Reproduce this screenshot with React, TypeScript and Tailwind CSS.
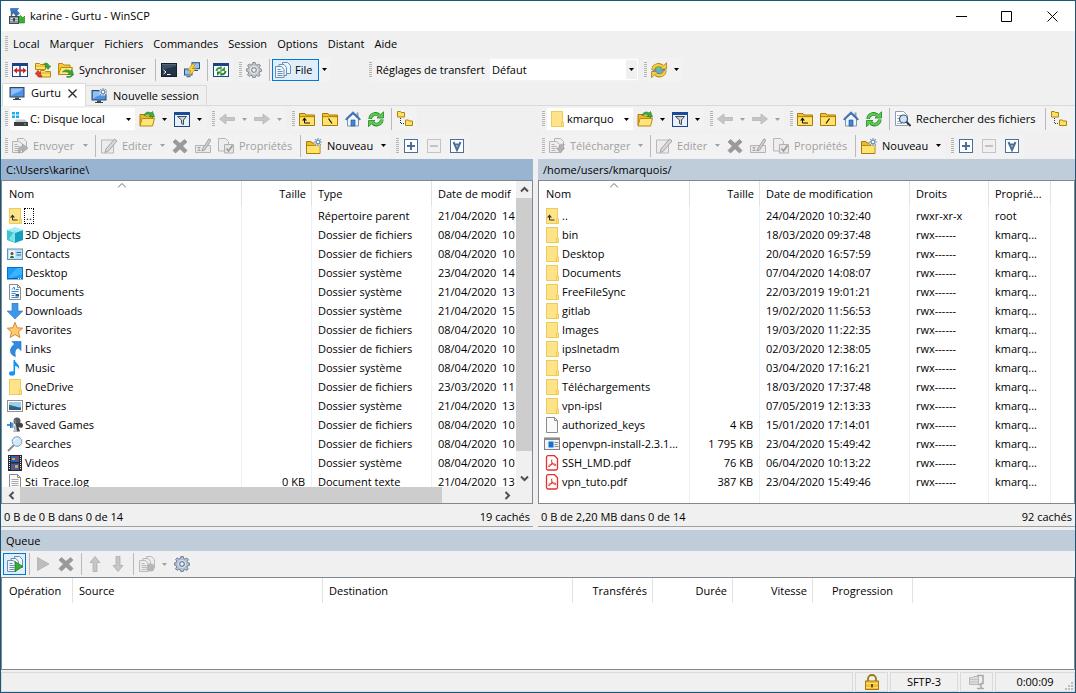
import React from 'react';

type Kids = { children?: React.ReactNode };

/* ---------- icons ---------- */

const Ico = ({ children }: Kids) => (
    <svg width="16" height="16" viewBox="0 0 16 16" fill="none" className="shrink-0" aria-hidden="true">
        {children}
    </svg>
);

const Caret = ({ muted }: { muted?: boolean }) => (
    <svg width="5" height="3" viewBox="0 0 5 3" className="shrink-0" aria-hidden="true">
        <path d="M0 0h5L2.5 3z" fill={muted ? '#a0a0a0' : '#000'} />
    </svg>
);

const AppIcon = () => (
    <Ico>
        <path d="M1.5 0.5h8l-1.5 2 2.500 3-3.500 2.500-2.500-3-2 1.500z" fill="#2b7fe0" stroke="#1b5cb0" strokeWidth=".6" />
        <path d="M15.500 15h-7l1.500-2-1.500-3 3-2.500 2.500 2.500 1.500-2z" fill="#35b52f" stroke="#1d7a1b" strokeWidth=".6" />
        <path d="M2.500 9V6.500a2.500 2.500 0 0 1 5 0V9" stroke="#5b6470" strokeWidth="1.500" />
        <rect x=".5" y="8.500" width="9" height="7" fill="#8e99a6" stroke="#3f4853" />
        <path d="M1 10.500h8M1 12.500h8" stroke="#c3cad1" />
        <path d="M5 10v3.500" stroke="#20262d" strokeWidth="1.500" />
    </Ico>
);

const CompareIcon = () => (
    <Ico>
        <rect x=".5" y="1.500" width="15" height="13" fill="#fff" stroke="#1d4480" />
        <path d="M0 2.500h16" stroke="#1d4480" strokeWidth="3" />
        <path d="M8 2v12" stroke="#1d4480" strokeWidth="1.500" />
        <path d="M1.500 8.500l3.500-3v2h6v-2l3.500 3-3.500 3v-2H5v2z" fill="#d02424" />
    </Ico>
);

const SyncBrowseIcon = () => (
    <Ico>
        <path d="M.5 1.500h4l1 1h5v5h-10z" fill="#ffe06a" stroke="#b98a10" />
        <path d="M5.500 8.500h4l1 1h5v5.500h-10z" fill="#ffe06a" stroke="#b98a10" />
        <path d="M1 4h9M6 11h9" stroke="#d8a920" />
        <path d="M8.500 2.200C10.500.2 13.500.8 14 4h1.800l-2.800 3.500L9.800 4h1.700c-.3-1.300-1.500-1.800-3-1.800z" fill="#3aa535" stroke="#1f7a1c" strokeWidth=".5" />
        <path d="M7 14.500c-2.500 1.500-5 .5-5.500-2.500H0l3-3.800L6.200 12H4.500c.3 1.300 1.200 1.800 2.500 1.500z" fill="#e83a3a" stroke="#a31c1c" strokeWidth=".5" />
    </Ico>
);

const FolderSyncIcon = () => (
    <Ico>
        <path d="M.5 12.500v-11h4l1.500 1.500h6v3" fill="#f5cb3c" stroke="#b98a10" />
        <path d="M.5 12.500l2.500-7h11.500l-2.500 7z" fill="#ffe682" stroke="#b98a10" />
        <path d="M4.500 10c2-2.500 5.500-2.800 8-.8l1.500-1.700 1.500 5.500-5.500-.5 1.300-1.500c-2-1.300-4-1.500-6.800-1z" fill="#3aa535" stroke="#1f7a1c" strokeWidth=".6" />
        <path d="M14.500 13c-1.500 2-4 2.300-6 1.500" stroke="#2f9630" strokeWidth="1.500" />
    </Ico>
);

const ConsoleIcon = () => (
    <Ico>
        <rect x=".5" y="1.500" width="15" height="13" fill="#243446" stroke="#14202e" />
        <path d="M1 2.500h14" stroke="#6b8098" />
        <path d="M1 8L15 4v-1.500H1z" fill="#3c5064" />
        <path d="M2.500 8l2.500 2-2.500 2" stroke="#fff" />
        <path d="M6 12.500h3.500" stroke="#fff" />
    </Ico>
);

const PuttyIcon = () => (
    <Ico>
        <rect x="8" y=".7" width="7.500" height="6" fill="#8fc3f7" stroke="#2d527d" />
        <path d="M10 8.500h4" stroke="#2d527d" />
        <rect x=".5" y="7" width="7.500" height="6" fill="#8fc3f7" stroke="#2d527d" />
        <path d="M2.500 14.700h4" stroke="#2d527d" />
        <path d="M8.500 2L3.500 8.500h3.200L5.500 14l6.500-7.500H8.500L11.500 2z" fill="#ffd43a" stroke="#b58610" strokeWidth=".6" />
    </Ico>
);

/* two arrows chasing each other, shared by the refresh-like icons */
const CycleArrows = ({ fill, edge }: { fill: string; edge: string }) => (
    <>
        <path d="M2.200 8C2.500 3.500 7.500 1.500 11.200 4.200" stroke={edge} strokeWidth="3.600" />
        <path d="M15.500 .8v6.200H9z" fill={fill} stroke={edge} strokeWidth=".8" />
        <path d="M2.200 7.700C2.500 3.500 7.500 1.500 11.800 4.600" stroke={fill} strokeWidth="2.200" />
        <path d="M13.800 8.500C13.500 13 8.500 15 4.800 12.300" stroke={edge} strokeWidth="3.600" />
        <path d="M.5 15.700V9.500H7z" fill={fill} stroke={edge} strokeWidth=".8" />
        <path d="M13.800 8.800C13.500 13 8.500 15 4.200 11.900" stroke={fill} strokeWidth="2.200" />
    </>
);

const RefreshPanelsIcon = () => (
    <Ico>
        <rect x=".5" y="1.500" width="15" height="13" fill="#fff" stroke="#1d4480" />
        <path d="M0 2.500h16" stroke="#1d4480" strokeWidth="3" />
        <path d="M8 3.500v11" stroke="#5f81b5" />
        <path d="M3.500 9C3.500 6.500 6 5.300 8.500 6.300" stroke="#35a035" strokeWidth="2" />
        <path d="M12 4.500v4.500H7.500z" fill="#35a035" />
        <path d="M12.500 9c0 2.800-2.500 4-5 3" stroke="#23862a" strokeWidth="2" />
        <path d="M4 14V9.500h4.500z" fill="#23862a" />
    </Ico>
);

const GearIcon = ({ blue }: { blue?: boolean }) => (
    <Ico>
        <path
            d="M6.800 .5h2.400l.4 2 1.500.6L12.900 2l1.500 1.700-1.200 1.700.6 1.500 1.900.3v2l-2 .5-.6 1.500 1.100 1.800-1.500 1.500-1.800-1.100-1.400.6-.4 1.700H6.800l-.5-1.900-1.500-.6-1.700 1.200-1.600-1.600 1.200-1.700-.6-1.500L.3 9V7l1.900-.4.6-1.500-1.200-1.600L3.200 1.900l1.700 1.200 1.500-.6z"
            fill={blue ? '#b4c0cf' : '#c3c6ca'}
            stroke={blue ? '#5f7690' : '#7d8288'}
            strokeWidth=".9"
        />
        <circle cx="8" cy="8" r="3.700" stroke={blue ? '#dbe4ee' : '#e8eaec'} />
        <circle cx="8" cy="8" r="2.300" fill="#f0f0f0" stroke={blue ? '#4f6b8c' : '#7d8288'} />
    </Ico>
);

const CopiesIcon = ({ tone = '#6a90b8', fill = '#eef5fc', children }: { tone?: string; fill?: string } & Kids) => (
    <Ico>
        <path d="M7.500 .5h5l3 3v8h-8z" fill={fill} stroke={tone} />
        <path d="M4 2.500h5l2.500 3v8H4z" fill={fill} stroke={tone} />
        <path d="M.5 4.500h6l2.500 3v8H.5z" fill={fill} stroke={tone} />
        <path d="M2.500 7.500h3M2.500 9.500h5M2.500 11.500h5M2.500 13.500h5" stroke={tone} />
        {children}
    </Ico>
);

const GlobeIcon = () => (
    <Ico>
        <circle cx="8" cy="8.500" r="6" fill="#4c9ae8" stroke="#2a67b0" strokeWidth=".6" />
        <path d="M5 5.500l3-1L9.500 6 7 9l-1.500-.5zM8.500 9.500l3-.5v2l-2 1.500z" fill="#6fcf5c" />
        <CycleArrows fill="#f7cf45" edge="#a87c0c" />
        <circle cx="8" cy="8.300" r="2.800" fill="#5aa6ec" />
        <path d="M6 7l2-1.500 1.500 1L7.500 9zM8.500 9.500l2-.5-1 1.800z" fill="#6fcf5c" />
    </Ico>
);

const MonitorIcon = ({ star }: { star?: boolean }) => (
    <Ico>
        <rect x="1" y="2.500" width="14" height="9.500" fill="#4d93e6" stroke="#3b4654" />
        <path d="M2 11V3.500h12C11 8 6 7 2 11z" fill="#8fc0f7" />
        <path d="M6 12.500h4v1.500H6z" fill="#3b4654" />
        <path d="M4 14.500h8" stroke="#3b4654" />
        {star && <StarBurst />}
    </Ico>
);

const StarBurst = () => (
    <>
        <circle cx="12" cy="4" r="3.800" fill="#f4f6f8" />
        <path d="M12 0v8M8 4h8M9.200 1.200l5.600 5.600M14.800 1.200L9.200 6.800" stroke="#6c8fb4" strokeWidth="1.100" />
        <circle cx="12" cy="4" r="1.800" fill="#fff" stroke="#6c8fb4" />
    </>
);

const DiskIcon = () => (
    <Ico>
        <path d="M0 1h3v2.500H0zM4 1h3v2.500H4zM0 4.500h3V7H0zM4 4.500h3V7H4z" fill="#18aef0" />
        <path d="M4 8.500h9l2.500 3h-13z" fill="#c9cccf" />
        <rect x="2" y="11" width="14" height="4" fill="#3c3f43" />
        <path d="M12 13h2" stroke="#3fe05a" />
    </Ico>
);

const FolderOpenIcon = () => (
    <Ico>
        <path d="M1 14.500v-11h4.500l1 1.500h7v3" fill="#eeb92c" stroke="#a97b0b" />
        <path d="M1 15l2-7.500h12.500L13.500 15z" fill="#ffe57a" stroke="#b98a10" />
        <path d="M5 4.500C6 1.500 9 0 12 2l1.500-1.500L15.500 6l-5.500-.3 1.500-1.500C9.500 2.800 7.500 3 5 4.500z" fill="#3fae3a" stroke="#1e7b1d" strokeWidth=".6" />
    </Ico>
);

const FilterIcon = () => (
    <Ico>
        <rect x=".5" y="1.500" width="15" height="14" fill="#e8f1fb" stroke="#1d4480" />
        <path d="M0 2.500h16" stroke="#1d4a94" strokeWidth="3" />
        <path d="M3.500 5.500h9L9.500 9v4.500l-2-1V9z" fill="#cfd3d8" stroke="#454b54" />
    </Ico>
);

const ArrowIcon = ({ flip }: { flip?: boolean }) => (
    <Ico>
        <path
            d={flip ? 'M15.500 8L9 3v3.500H.5v3H9V13z' : 'M.5 8L7 3v3.500h8.500v3H7V13z'}
            fill="#c6c6c6"
            stroke="#b0b0b0"
            strokeWidth=".7"
        />
    </Ico>
);

const FolderIcon = ({ children }: Kids) => (
    <Ico>
        <path d="M.5 14.500v-12h5.500l1 1.500h8.500v10.500z" fill="#f3c331" stroke="#a87a0a" />
        <path d="M1 6.500h14v7.500H1z" fill="#ffe36c" />
        <path d="M1 5.500h14" stroke="#b98a10" />
        {children}
    </Ico>
);

const FolderUpIcon = () => (
    <FolderIcon>
        <path d="M5.500 8.500v3.500h5.500" stroke="#111" />
        <path d="M5.500 6.500L8 9.500H3z" fill="#111" />
    </FolderIcon>
);

const FolderRootIcon = ({ flip }: { flip?: boolean }) => (
    <FolderIcon>
        <path d={flip ? 'M9.500 7.500l-3.500 5' : 'M6.500 7.500l3.500 5'} stroke="#111" strokeWidth="1.200" />
    </FolderIcon>
);

const HomeIcon = () => (
    <Ico>
        <path d="M2.500 7.500V15h11V7.500L8 2z" fill="#eef4fb" stroke="#7e94ad" />
        <path d="M11.500 1.500h2V6h-2z" fill="#8da0b5" />
        <path d="M8 .7L.5 8l1 1L8 3l6.500 6 1-1z" fill="#3c77c4" stroke="#24508c" strokeWidth=".6" />
        <path d="M6 9h4v6H6z" fill="#3f86d8" stroke="#24508c" strokeWidth=".6" />
    </Ico>
);

const RefreshIcon = () => (
    <Ico>
        <CycleArrows fill="#5ecb50" edge="#1c8520" />
    </Ico>
);

const TreeIcon = () => (
    <Ico>
        <path d="M.5 .5h3l.7 1h3.300v4.500h-7zM8.500 9h3l.7 1h3.300v4.500h-7z" fill="#ffdf60" stroke="#b08410" />
        <path d="M3.500 7v5.500h4" stroke="#333" strokeDasharray="1 1" />
    </Ico>
);

const TransferIcon = ({ down }: { down?: boolean }) => (
    <Ico>
        <path d="M5.500 .5h6l3 3v8h-9z" fill="#ededed" stroke="#b4b4b4" />
        <path d="M.5 3.500h7l3 3v8H.5z" fill="#ededed" stroke="#b4b4b4" />
        <path d="M2.500 6.500h3M2.500 8.500h5M2.500 10.500h4M2.500 12.500h4" stroke="#b4b4b4" />
        <path
            d={down ? 'M15.500 6.500c-3-1-5.500 0-5.500 3.500H7.500l4 5 4-5h-2.500c0-1.500.5-2.500 2.500-3.500z' : 'M6.500 15v-3.500c0-2 1.500-3 4-3V6l5.500 4-5.500 4.500V12c-1.500 0-2.500.5-2.500 3z'}
            fill="#b2b2b2"
            stroke="#9b9b9b"
            strokeWidth=".6"
        />
    </Ico>
);

const EditIcon = () => (
    <Ico>
        <path d="M.5 2h12v13H.5z" fill="#ececec" stroke="#b8b8b8" />
        <path d="M5 11l8.500-10 2.500 2L7.500 13 4 14.500z" fill="#d6d6d6" stroke="#a6a6a6" />
    </Ico>
);

const CrossIcon = () => (
    <Ico>
        <path d="M3.500 1.500L8 5.500l4.500-4L15 4l-4.500 4 4.500 4.500-2.500 2.500L8 10.800 3.500 15 1 12.500 5.500 8 1 4z" fill="#9a9a9a" stroke="#898989" strokeWidth=".7" />
    </Ico>
);

const RenameIcon = () => (
    <Ico>
        <path d="M.5 7.500h15v7H.5z" fill="#e9e9e9" stroke="#b4b4b4" />
        <path d="M2.500 9.500h3M2.500 12.500h3M4 9.500v3" stroke="#a5a5a5" />
        <path d="M7.500 11L14 .8l2 1.500L9.500 12l-2.500 1z" fill="#d2d2d2" stroke="#a0a0a0" />
    </Ico>
);

const PropsIcon = () => (
    <Ico>
        <path d="M.5 .5h7l3 3v9.500H.5z" fill="#ededed" stroke="#b6b6b6" />
        <path d="M6.500 6.500h9v8.500h-9z" fill="#e6e6e6" stroke="#b0b0b0" />
        <path d="M8.500 10.500l2 2.500 4-5.500" stroke="#9a9a9a" strokeWidth="1.600" />
    </Ico>
);

const NewFolderIcon = () => (
    <Ico>
        <path d="M.5 15.500v-12h4.500l1 1.500h8v10.500z" fill="#eeb92c" stroke="#a97b0b" />
        <path d="M1 8h12.500v7H1z" fill="#ffe36c" />
        <path d="M1 7.500h12.500" stroke="#b98a10" />
        <StarBurst />
    </Ico>
);

const BoxIcon = ({ muted, children }: { muted?: boolean } & Kids) => (
    <Ico>
        <rect x="1.500" y="1.500" width="13" height="13" fill={muted ? '#f0f0f0' : '#fff'} stroke={muted ? '#c4c4c4' : '#4a6f9c'} />
        {children}
    </Ico>
);

const PlusIcon = () => (
    <BoxIcon>
        <path d="M8 4v8M4 8h8" stroke="#4a6f9c" strokeWidth="2" />
    </BoxIcon>
);

const MinusIcon = () => (
    <BoxIcon muted>
        <path d="M4 8h8" stroke="#c4c4c4" strokeWidth="2" />
    </BoxIcon>
);

const InvertIcon = () => (
    <BoxIcon>
        <path d="M4.500 4L8 12l3.500-8M5 6.500h6" stroke="#4a6f9c" strokeWidth="2" />
    </BoxIcon>
);

const SearchFilesIcon = () => (
    <Ico>
        <path d="M.5 .5h8l4 4v10H.5z" fill="#fff" stroke="#8a9db3" />
        <path d="M2 4.500h4M2 7.500h3M2 10.500h3M2 12.500h5" stroke="#a5b6c9" />
        <circle cx="8.500" cy="8" r="4" fill="#cfe3f7" stroke="#3b5573" strokeWidth="1.200" />
        <path d="M11.500 11l4 4" stroke="#2c3b4d" strokeWidth="2" />
    </Ico>
);

/* list icons */

const PlainFolder = ({ up }: { up?: boolean }) => (
    <Ico>
        <path d="M2 0h12v11h1v5H2z" fill="#ffe389" />
        <path d="M2 .5h11.500v10.500M2.500 0v15.500h12v-4.500h-2v4" stroke="#eccb58" />
        {up && <path d="M5.500 8.500v3.500h5" stroke="#333" />}
        {up && <path d="M5.500 6.500L8 9.500H3z" fill="#333" />}
    </Ico>
);

const CubeIcon = () => (
    <Ico>
        <path d="M0 3l8-3 8 3-8 3z" fill="#a8ecf2" />
        <path d="M0 3l8 3v10l-8-3z" fill="#3cc3d2" />
        <path d="M16 3L8 6v10l8-3z" fill="#12a0c0" />
        <path d="M2 12l6-9v13z" fill="#7fe0e8" />
    </Ico>
);

const ContactsIcon = () => (
    <Ico>
        <rect x=".5" y="3" width="15" height="10.500" fill="#c3e0f5" stroke="#5a97b8" />
        <rect x="2" y="4.500" width="6" height="7.500" fill="#eef6fb" />
        <path d="M3 12c0-3 4-3 4 0z" fill="#336b3a" />
        <circle cx="5" cy="7.500" r="1.500" fill="#704a30" />
        <path d="M9.500 6.500h4.500M9.500 9h4.500" stroke="#2c6a9a" />
    </Ico>
);

const DesktopIcon = () => (
    <Ico>
        <rect x=".5" y="2.500" width="15" height="11.500" fill="#1aa0fb" stroke="#0b70c4" />
        <path d="M1 14v-1l9-10h5v6z" fill="#3db2ff" />
        <path d="M1 13.500h14" stroke="#0a5fae" />
        <path d="M11 13.500h1M13 13.500h1" stroke="#fff" />
    </Ico>
);

const PageIcon = ({ lines, rich }: { lines?: boolean; rich?: boolean }) => (
    <Ico>
        <path d="M2.500 .5h8l3 3v12h-11z" fill="#fafafa" stroke="#8b8b8b" />
        <path d="M10.500 .5v3h3" stroke="#8b8b8b" />
        {lines && <path d="M4.500 5.500h7M4.500 7.500h7M4.500 9.500h7M4.500 11.500h7M4.500 13.500h7" stroke="#a9a9a9" />}
        {rich && <path d="M5 5.500L7 3l1 3M9 5.500h3M4.500 7.500h7M4.500 9.500h4M4.500 11.500h3M4.500 13.500h7" stroke="#3f8fd0" />}
        {rich && <path d="M8.500 10h3.500v2.500H8.500z" fill="#27597d" />}
    </Ico>
);

const DownloadsIcon = () => (
    <Ico>
        <path d="M5 0h6v8h4.800L8 16 .2 8H5z" fill="#3f97e8" stroke="#2475c7" strokeWidth=".6" />
    </Ico>
);

const FavoritesIcon = () => (
    <Ico>
        <path d="M8 .5l2.200 5.300 5.500.4-4.200 3.700 1.400 5.600L8 12.500l-4.900 3 1.400-5.600L.3 6.200l5.500-.4z" fill="#ffcb6b" stroke="#d0883a" />
    </Ico>
);

const LinksIcon = () => (
    <Ico>
        <path d="M5 .5h9v9l-2.500-2.500c-3.500 1-4 4-3 8.500C3 14 1 8.500 7.500 3z" fill="#2f8be0" stroke="#1c6ab8" strokeWidth=".6" />
    </Ico>
);

const MusicIcon = () => (
    <Ico>
        <ellipse cx="5" cy="13.500" rx="3" ry="2.200" fill="#0e96f0" />
        <path d="M6.500 0H8c0 3.500 5.500 4 4 9.500C11.500 7 9.500 6 8 6v7.500H6.500z" fill="#0e96f0" />
    </Ico>
);

const PicturesIcon = () => (
    <Ico>
        <rect x=".5" y="2.500" width="15" height="11" fill="#fff" stroke="#8f8f8f" />
        <rect x="2" y="4" width="12" height="8" fill="#9ccdf0" />
        <path d="M2 8c4-1 7 1.500 12 1.500V12H2z" fill="#2f5f80" />
        <path d="M2 7c3-.5 4 1.500 7 2H2z" fill="#3d7a58" />
    </Ico>
);

const GamesIcon = () => (
    <Ico>
        <circle cx="10" cy="4" r="3.500" fill="#555b62" />
        <path d="M10 6.500c4-2 6.500 0 6 2.500s-3 2-4.500 1l1.500 4.500H6.500L8.500 6z" fill="#3f454b" />
        <path d="M8 2c-1 2 .5 3 .5 5L6.500 14.500H10z" fill="#bfc5ca" />
        <path d="M0 7h3V5l3.500 1v5L3 10.500V9H0z" fill="#4d92cf" />
        <path d="M3.500 5v6" stroke="#2d6ca8" />
    </Ico>
);

const SearchesIcon = () => (
    <Ico>
        <path d="M1 15l6-6" stroke="#8b8b8b" strokeWidth="2" />
        <circle cx="10" cy="5.500" r="4.800" fill="#cfe8fa" stroke="#7c9db5" />
        <path d="M7 5c.5-2 2-2.500 3.500-2.500" stroke="#fff" />
    </Ico>
);

const VideosIcon = () => (
    <Ico>
        <path d="M1 0h14v16H1z" fill="#2b2b2b" />
        <path d="M2.500 1v14M13.500 1v14" stroke="#e8e8e8" strokeDasharray="1 1" />
        <path d="M4 1h8v6H4zM4 8.500h8V15H4z" fill="#2c62b8" />
        <path d="M5 3h3v2H5zM8 10h3v3H8z" fill="#e8a12e" />
        <path d="M9 2h2v3H9zM5 11h2v3H5z" fill="#c7372f" />
    </Ico>
);

const ExeIcon = () => (
    <Ico>
        <rect x=".5" y="2" width="15" height="11.500" fill="#f2f2f2" stroke="#7e7e7e" />
        <path d="M0 3h16" stroke="#8a8a8a" strokeWidth="2" />
        <rect x="4.500" y="5.500" width="5" height="6" fill="#0b74d4" />
        <path d="M10.500 6.500h4M10.500 8.500h3M10.500 10.500h4" stroke="#8f8f8f" />
    </Ico>
);

const PdfIcon = () => (
    <Ico>
        <path d="M4 .7h6.500l3 3v9.800a1.500 1.500 0 0 1-1.500 1.500H4a1.500 1.500 0 0 1-1.500-1.500V2.200A1.500 1.500 0 0 1 4 .7z" fill="#fff" stroke="#e2322d" strokeWidth="1.300" />
        <path d="M8 4.500c-1 0 0 3 0 3.500-.5 1.500-1.500 3.500-3 3.500s.5-2 3-2.500 4.500.5 4 1.200C11 11.500 8.500 9 8 7.500" stroke="#e2322d" />
    </Ico>
);

const LockIcon = () => (
    <Ico>
        <path d="M4 8V5a4 4 0 0 1 8 0v3" stroke="#a2761a" strokeWidth="1.800" />
        <rect x="1.500" y="7" width="13" height="8.500" fill="#f5c02e" stroke="#a2761a" />
        <path d="M2 9.500h12M2 13.500h12" stroke="#ffdf74" />
        <path d="M8 10v3.500" stroke="#4a3505" strokeWidth="1.600" />
    </Ico>
);

const CompressIcon = () => (
    <Ico>
        <path d="M.5 3.500h3l1-1h5v8h-9z" fill="#dcdcdc" stroke="#b8b8b8" />
        <path d="M1 5.500h8M1 8h8" stroke="#c4c4c4" />
        <path d="M8 1.500h6v8H12v5M8 14.500h7M11 10.500H9" stroke="#ababab" strokeWidth="1.600" />
    </Ico>
);

/* ---------- toolbar parts ---------- */

const Row = ({ className = '', children }: { className?: string } & Kids) => (
    <div className={`flex shrink-0 items-center gap-1.5 overflow-hidden pl-1 ${className}`}>{children}</div>
);

const Grip = () => (
    <span className="mr-px h-4 w-[3px] bg-[repeating-linear-gradient(to_bottom,#b4b4b4_0_1px,transparent_1px_2px)]" />
);

const Group = ({ children }: Kids) => (
    <div className="flex h-6 shrink-0 items-center bg-[#f2f2f2]">
        <Grip />
        {children}
    </div>
);

const Sep = () => (
    <span className="flex w-1.5 shrink-0 pl-[3px]">
        <span className="h-[22px] w-px bg-[#b9b9b9]" />
    </span>
);

type ToolProps = {
    title: string;
    icon: React.ReactNode;
    text?: string;
    className?: string;
    disabled?: boolean;
};

const Tool = ({ title, icon, text, className = 'w-[23px]', disabled }: ToolProps) => (
    <button
        type="button"
        title={title}
        disabled={disabled}
        className={`flex h-[22px] shrink-0 items-center gap-[5px] whitespace-nowrap pl-[3px] disabled:text-[#a0a0a0] ${className}`}
    >
        {icon}
        {text}
    </button>
);

const Drop = ({ title, disabled }: { title: string; disabled?: boolean }) => (
    <button type="button" title={title} disabled={disabled} className="flex h-[22px] w-3 shrink-0 items-center pl-[3px]">
        <Caret muted={disabled} />
    </button>
);

const NavBar = ({ remote }: { remote?: boolean }) => (
    <Row className="h-[26px]">
        <Group>
            <div className={`mx-px flex h-[22px] items-center bg-white pr-1 pl-0.5 ${remote ? 'w-[86px]' : 'w-[125px]'}`}>
                {remote ? <PlainFolder /> : <DiskIcon />}
                <select
                    aria-label={remote ? 'Dossier distant' : 'Lecteur local'}
                    className="min-w-0 flex-1 appearance-none overflow-hidden bg-white pl-0.5 outline-none"
                >
                    <option>{remote ? 'kmarquo' : 'C: Disque local'}</option>
                </select>
                <span className="pl-1">
                    <Caret />
                </span>
            </div>
            <Tool title="Ouvrir" icon={<FolderOpenIcon />} />
            <Drop title="Signets" />
            <Tool title="Filtre" icon={<FilterIcon />} />
            <Drop title="Filtres" />
        </Group>
        <Group>
            <Tool title="Précédent" icon={<ArrowIcon />} disabled />
            <Drop title="Historique précédent" disabled />
            <Tool title="Suivant" icon={<ArrowIcon flip />} disabled />
            <Drop title="Historique suivant" disabled />
        </Group>
        <Group>
            <Tool title="Répertoire parent" icon={<FolderUpIcon />} />
            <Tool title="Racine" icon={<FolderRootIcon flip={remote} />} />
            <Tool title="Accueil" icon={<HomeIcon />} />
            <Tool title="Rafraîchir" icon={<RefreshIcon />} />
            <Sep />
            {remote && (
                <>
                    <Tool title="Rechercher" icon={<SearchFilesIcon />} text="Rechercher des fichiers" className="w-[150px]" />
                    <Sep />
                </>
            )}
            <Tool title="Arborescence" icon={<TreeIcon />} />
        </Group>
    </Row>
);

const ActionBar = ({ remote }: { remote?: boolean }) => (
    <Row className="h-[27px]">
        <Group>
            <Tool
                title="Transférer"
                icon={<TransferIcon down={remote} />}
                text={remote ? 'Télécharger' : 'Envoyer'}
                className={remote ? 'w-[89px]' : 'w-[71px]'}
                disabled
            />
            <Drop title="Options de transfert" disabled />
            <Sep />
            <Tool title="Editer" icon={<EditIcon />} text="Editer" className="w-[59px]" disabled />
            <Drop title="Editer avec" disabled />
            <Tool title="Supprimer" icon={<CrossIcon />} disabled />
            <Tool title="Renommer" icon={<RenameIcon />} disabled />
            <Tool title="Propriétés" icon={<PropsIcon />} text="Propriétés" className="w-[82px]" disabled />
            <Sep />
            <Tool title="Nouveau" icon={<NewFolderIcon />} text="Nouveau" className="w-[75px]" />
            <Drop title="Nouveau élément" />
        </Group>
        <Group>
            <Tool title="Sélectionner" icon={<PlusIcon />} />
            <Tool title="Désélectionner" icon={<MinusIcon />} disabled />
            <Tool title="Tout sélectionner" icon={<InvertIcon />} />
        </Group>
    </Row>
);

/* ---------- file lists ---------- */

type Entry = { icon: React.ReactNode; cells: string[] };
type Column = { label: string; width: string; right?: boolean };

const dir = 'Dossier de fichiers';
const sys = 'Dossier système';

const localColumns: Column[] = [
    { label: 'Nom', width: 'w-[240px]' },
    { label: 'Taille', width: 'w-[70px]', right: true },
    { label: 'Type', width: 'w-[120px]' },
    { label: 'Date de modif', width: 'w-[86px]' },
];

const localFiles: Entry[] = [
    { icon: <PlainFolder up />, cells: ['..', '', 'Répertoire parent', '21/04/2020  14'] },
    { icon: <CubeIcon />, cells: ['3D Objects', '', dir, '08/04/2020  10'] },
    { icon: <ContactsIcon />, cells: ['Contacts', '', dir, '08/04/2020  10'] },
    { icon: <DesktopIcon />, cells: ['Desktop', '', sys, '23/04/2020  14'] },
    { icon: <PageIcon rich />, cells: ['Documents', '', sys, '21/04/2020  13'] },
    { icon: <DownloadsIcon />, cells: ['Downloads', '', sys, '21/04/2020  15'] },
    { icon: <FavoritesIcon />, cells: ['Favorites', '', dir, '08/04/2020  10'] },
    { icon: <LinksIcon />, cells: ['Links', '', dir, '08/04/2020  10'] },
    { icon: <MusicIcon />, cells: ['Music', '', sys, '08/04/2020  10'] },
    { icon: <PlainFolder />, cells: ['OneDrive', '', dir, '23/03/2020  11'] },
    { icon: <PicturesIcon />, cells: ['Pictures', '', sys, '21/04/2020  13'] },
    { icon: <GamesIcon />, cells: ['Saved Games', '', dir, '08/04/2020  10'] },
    { icon: <SearchesIcon />, cells: ['Searches', '', dir, '08/04/2020  10'] },
    { icon: <VideosIcon />, cells: ['Videos', '', sys, '08/04/2020  10'] },
    { icon: <PageIcon lines />, cells: ['Sti_Trace.log', '0 KB', 'Document texte', '21/04/2020  13'] },
];

const remoteColumns: Column[] = [
    { label: 'Nom', width: 'w-[151px]' },
    { label: 'Taille', width: 'w-[70px]', right: true },
    { label: 'Date de modification', width: 'w-[150px]' },
    { label: 'Droits', width: 'w-[79px]' },
    { label: 'Proprié...', width: 'w-[62px]' },
];

const rwx = 'rwx------';
const own = 'kmarq...';

const remoteFiles: Entry[] = [
    { icon: <PlainFolder up />, cells: ['..', '', '24/04/2020 10:32:40', 'rwxr-xr-x', 'root'] },
    { icon: <PlainFolder />, cells: ['bin', '', '18/03/2020 09:37:48', rwx, own] },
    { icon: <PlainFolder />, cells: ['Desktop', '', '20/04/2020 16:57:59', rwx, own] },
    { icon: <PlainFolder />, cells: ['Documents', '', '07/04/2020 14:08:07', rwx, own] },
    { icon: <PlainFolder />, cells: ['FreeFileSync', '', '22/03/2019 19:01:21', rwx, own] },
    { icon: <PlainFolder />, cells: ['gitlab', '', '19/02/2020 11:56:53', rwx, own] },
    { icon: <PlainFolder />, cells: ['Images', '', '19/03/2020 11:22:35', rwx, own] },
    { icon: <PlainFolder />, cells: ['ipslnetadm', '', '02/03/2020 12:38:05', rwx, own] },
    { icon: <PlainFolder />, cells: ['Perso', '', '03/04/2020 17:16:21', rwx, own] },
    { icon: <PlainFolder />, cells: ['Téléchargements', '', '18/03/2020 17:37:48', rwx, own] },
    { icon: <PlainFolder />, cells: ['vpn-ipsl', '', '07/05/2019 12:13:33', rwx, own] },
    { icon: <PageIcon />, cells: ['authorized_keys', '4 KB', '15/01/2020 17:14:01', rwx, own] },
    { icon: <ExeIcon />, cells: ['openvpn-install-2.3.1...', '1 795 KB', '23/04/2020 15:49:42', rwx, own] },
    { icon: <PdfIcon />, cells: ['SSH_LMD.pdf', '76 KB', '06/04/2020 10:13:22', rwx, own] },
    { icon: <PdfIcon />, cells: ['vpn_tuto.pdf', '387 KB', '23/04/2020 15:49:46', rwx, own] },
];

const FileTable = ({ columns, files, focused }: { columns: Column[]; files: Entry[]; focused?: boolean }) => (
    <table className="h-full w-px table-fixed border-separate border-spacing-0">
        <thead>
            <tr className="h-[25px]">
                {columns.map((col, i) => (
                    <th
                        key={col.label}
                        className={`relative border-r border-[#e2e2e2] font-normal whitespace-nowrap ${col.width} ${
                            col.right ? 'pr-[5px] text-right' : i === 0 ? 'pl-[7px] text-left' : 'pl-1.5 text-left'
                        }`}
                    >
                        {col.label}
                        {i === 0 && (
                            <svg width="9" height="5" viewBox="0 0 9 5" className="absolute top-0.5 left-1/2 -translate-x-1/2" aria-hidden="true">
                                <path d="M.5 4.500l4-4 4 4" fill="none" stroke="#6d6d6d" />
                            </svg>
                        )}
                    </th>
                ))}
            </tr>
        </thead>
        <tbody>
            {files.map((file, r) => (
                <tr key={r} className="h-[19px]">
                    {file.cells.map((cell, i) => (
                        <td
                            key={i}
                            className={`h-[19px] border-r border-[#e9f2fb] p-0 whitespace-pre ${
                                columns[i].right ? 'pr-1.5 text-right' : i === 0 ? 'pl-[5px]' : 'pl-1.5'
                            }`}
                        >
                            {i === 0 ? (
                                <span className="flex h-[19px] items-center gap-0.5">
                                    {file.icon}
                                    {focused && r === 0 ? (
                                        <span className="-ml-px flex h-4 items-center border border-dotted border-black px-px">{cell}</span>
                                    ) : (
                                        <span>{cell}</span>
                                    )}
                                </span>
                            ) : (
                                cell
                            )}
                        </td>
                    ))}
                </tr>
            ))}
            <tr>
                {columns.map((col) => (
                    <td key={col.label} className="border-r border-[#e9f2fb] p-0" />
                ))}
            </tr>
        </tbody>
    </table>
);

const ScrollButton = ({ title, d, className }: { title: string; d: string; className: string }) => (
    <button type="button" title={title} className={`flex shrink-0 items-center justify-center bg-[#f0f0f0] ${className}`}>
        <svg width="9" height="9" viewBox="0 0 9 9" aria-hidden="true">
            <path d={d} fill="none" stroke="#505050" strokeWidth="2" />
        </svg>
    </button>
);

const Panel = ({ remote }: { remote?: boolean }) => (
    <section className={`flex min-w-0 flex-col ${remote ? 'flex-[537]' : 'flex-[532]'}`}>
        <NavBar remote={remote} />
        <ActionBar remote={remote} />
        <div className={`flex h-[21px] shrink-0 items-center pl-[5px] ${remote ? 'bg-[#bfcddb]' : 'bg-[#99b4d1]'}`}>
            {remote ? '/home/users/kmarquois/' : 'C:\\Users\\karine\\'}
        </div>
        <div className="flex min-h-0 flex-1 flex-col border border-[#828790] bg-white">
            {remote ? (
                <div className="min-h-0 flex-1 overflow-hidden">
                    <FileTable columns={remoteColumns} files={remoteFiles} />
                </div>
            ) : (
                <>
                    <div className="flex min-h-0 flex-1">
                        <div className="min-w-0 flex-1 overflow-hidden">
                            <FileTable columns={localColumns} files={localFiles} focused />
                        </div>
                        <div className="flex w-4 shrink-0 flex-col bg-[#f0f0f0]">
                            <ScrollButton title="Haut" d="M1 6.500l3.500-3.500L8 6.500" className="h-[17px]" />
                            <div className="flex-[252] bg-[#cdcdcd]" />
                            <div className="flex-[19]" />
                            <ScrollButton title="Bas" d="M1 2.500L4.500 6 8 2.500" className="h-[17px]" />
                        </div>
                    </div>
                    <div className="flex h-4 shrink-0 bg-[#f0f0f0] pr-4">
                        <ScrollButton title="Gauche" d="M6.500 1L3 4.500 6.500 8" className="w-[18px]" />
                        <div className="flex-[421] bg-[#cdcdcd]" />
                        <div className="flex-[56]" />
                        <ScrollButton title="Droite" d="M2.500 1L6 4.500 2.500 8" className="w-[18px]" />
                    </div>
                </>
            )}
        </div>
        <div className="flex h-[23px] shrink-0 items-center justify-between border-b border-[#a0a0a0] px-[3px] pt-[3px]">
            <span>{remote ? '0 B de 2,20 MB dans 0 de 14' : '0 B de 0 B dans 0 de 14'}</span>
            <span>{remote ? '92 cachés' : '19 cachés'}</span>
        </div>
    </section>
);

/* ---------- queue ---------- */

const queueColumns = [
    { label: 'Opération', style: 'w-[71px] pl-[7px] text-left' },
    { label: 'Source', style: 'w-[250px] pl-1.5 text-left' },
    { label: 'Destination', style: 'w-[250px] pl-1.5 text-left' },
    { label: 'Transférés', style: 'w-[80px] pr-[5px] text-right' },
    { label: 'Durée', style: 'w-[80px] pr-[5px] text-right' },
    { label: 'Vitesse', style: 'w-[80px] pr-[5px] text-right' },
    { label: 'Progression', style: 'w-[100px] text-center' },
];

const Queue = () => (
    <section className="mt-[3px] flex shrink-0 flex-col">
        <h2 className="flex h-[21px] items-center bg-[#bfcddb] pl-[5px]">Queue</h2>
        <div className="flex h-[26px] items-center">
            <button type="button" title="File d'attente" className="ml-0.5 flex h-[22px] w-[23px] items-center justify-center border border-[#0078d7] bg-[#e0eefa]">
                <CopiesIcon>
                    <path d="M8 5.500l8 5-8 5z" fill="#35ad30" stroke="#1b7a1a" strokeWidth=".7" />
                </CopiesIcon>
            </button>
            <Sep />
            <Tool
                title="Exécuter"
                disabled
                icon={
                    <Ico>
                        <path d="M2.500 1.500l11.500 6.500-11.500 6.500z" fill="#bdbdbd" stroke="#aaa" strokeWidth=".7" />
                    </Ico>
                }
            />
            <Tool title="Supprimer" icon={<CrossIcon />} disabled />
            <Sep />
            <Tool
                title="Monter"
                disabled
                icon={
                    <Ico>
                        <path d="M8 .5L3 6.500h3v9h4v-9h3z" fill="#c6c6c6" stroke="#acacac" strokeWidth=".8" />
                    </Ico>
                }
            />
            <Tool
                title="Descendre"
                disabled
                icon={
                    <Ico>
                        <path d="M8 15.500L3 9.500h3v-9h4v9h3z" fill="#c6c6c6" stroke="#acacac" strokeWidth=".8" />
                    </Ico>
                }
            />
            <Sep />
            <Tool
                title="Une fois la file vide"
                disabled
                icon={
                    <CopiesIcon tone="#b9b9b9" fill="#ececec">
                        <circle cx="11.500" cy="11.500" r="4" fill="#b5b5b5" />
                    </CopiesIcon>
                }
            />
            <Drop title="Actions" disabled />
            <Tool title="Préférences" icon={<GearIcon blue />} />
        </div>
        <div className="h-[93px] overflow-hidden border border-[#828790] bg-white">
            <table className="w-px table-fixed border-separate border-spacing-0">
                <thead>
                    <tr className="h-[25px]">
                        {queueColumns.map((col) => (
                            <th key={col.label} className={`border-r border-[#e2e2e2] font-normal ${col.style}`}>
                                {col.label}
                            </th>
                        ))}
                    </tr>
                </thead>
            </table>
        </div>
    </section>
);

const cell = 'flex h-full items-center justify-center border border-[#dadada]';

const StatusBar = () => (
    <footer className="flex h-[22px] shrink-0 gap-0.5 pt-0.5">
        <div className={`${cell} flex-1`} />
        <div className={`${cell} w-[33px]`}>
            <LockIcon />
        </div>
        <div className={`${cell} w-[68px]`}>SFTP-3</div>
        <div className={`${cell} w-[33px]`}>
            <CompressIcon />
        </div>
        <div className={`${cell} relative w-[80px]`}>
            0:00:09
            <svg width="8" height="8" viewBox="0 0 8 8" className="absolute right-px bottom-px" aria-hidden="true">
                <path d="M6 0h2v2H6zM3 3h2v2H3zM6 3h2v2H6zM0 6h2v2H0zM3 6h2v2H3zM6 6h2v2H6z" fill="#bdbdbd" />
            </svg>
        </div>
    </footer>
);

/* ---------- window ---------- */

const menus = ['Local', 'Marquer', 'Fichiers', 'Commandes', 'Session', 'Options', 'Distant', 'Aide'];

const TitleBar = () => (
    <header className="flex h-[30px] shrink-0 items-center bg-white pl-2">
        <AppIcon />
        <h1 className="flex-1 pl-[5px]">karine - Gurtu - WinSCP</h1>
        <button type="button" title="Réduire" className="flex h-full w-[46px] items-center justify-center">
            <svg width="11" height="11" viewBox="0 0 11 11" stroke="#000" fill="none"><path d="M0 5.500h11" /></svg>
        </button>
        <button type="button" title="Agrandir" className="flex h-full w-[45px] items-center justify-center">
            <svg width="11" height="11" viewBox="0 0 11 11" stroke="#000" fill="none"><path d="M.5 .5h10v10H.5z" /></svg>
        </button>
        <button type="button" title="Fermer" className="flex h-full w-[46px] items-center justify-center">
            <svg width="11" height="11" viewBox="0 0 11 11" stroke="#000" fill="none"><path d="M.5 .5l10 10M10.500 .5l-10 10" /></svg>
        </button>
    </header>
);

const MainToolbar = () => (
    <Row className="h-[25px]">
        <Group>
            <Tool title="Comparer" icon={<CompareIcon />} />
            <Tool title="Navigation synchronisée" icon={<SyncBrowseIcon />} />
            <Tool title="Synchroniser" icon={<FolderSyncIcon />} text="Synchroniser" className="w-[97px]" />
            <Sep />
            <Tool title="Console" icon={<ConsoleIcon />} />
            <Tool title="PuTTY" icon={<PuttyIcon />} />
            <Sep />
            <Tool title="Rafraîchir les panneaux" icon={<RefreshPanelsIcon />} />
        </Group>
        <Group>
            <Tool title="Préférences" icon={<GearIcon />} />
            <Sep />
            <button type="button" className="flex h-[22px] w-[47px] shrink-0 items-center gap-1 border border-[#0078d7] bg-[#e0eefa] pl-0.5">
                <CopiesIcon />
                File
            </button>
            <Drop title="Options de file" />
        </Group>
        <div className="w-[26px] shrink-0" />
        <Group>
            <label htmlFor="transfer" className="w-[117px] pl-[3px] whitespace-nowrap">
                Réglages de transfert
            </label>
            <div className="flex h-[21px] w-[148px] items-center bg-white">
                <select id="transfer" className="h-full flex-1 appearance-none bg-white pl-0.5 outline-none">
                    <option>Défaut</option>
                </select>
                <span className="my-px mr-px flex h-[19px] w-[11px] items-center justify-center bg-[#f0f0f0]">
                    <Caret />
                </span>
            </div>
        </Group>
        <Group>
            <Tool title="Langue" icon={<GlobeIcon />} />
            <Drop title="Langues" />
        </Group>
    </Row>
);

const Tabs = () => (
    <div className="flex h-6 shrink-0 items-end border-b border-[#dadada] pl-px">
        <div className="-mb-px flex h-[23px] w-[84px] items-center border-x border-t border-[#dadada] bg-white pb-1 pl-1.5">
            <MonitorIcon />
            <span className="flex-1 pl-1.5">Gurtu</span>
            <button type="button" title="Fermer l'onglet" className="mr-2">
                <svg width="9" height="9" viewBox="0 0 9 9" aria-hidden="true">
                    <path d="M.5 .5l8 8M8.500 .5l-8 8" stroke="#222" strokeWidth="1.200" />
                </svg>
            </button>
        </div>
        <button type="button" className="flex h-5 w-[121px] items-center gap-1.5 border-t border-r border-[#dadada] pl-[5px] whitespace-nowrap">
            <MonitorIcon star />
            Nouvelle session
        </button>
    </div>
);

const App = () => {
    return (
        <div className="flex h-screen w-full flex-col overflow-hidden border border-[#1b5878] bg-[#f0f0f0] font-['Open_Sans','Noto_Sans',sans-serif] text-[11px] leading-4 text-black">
            <TitleBar />
            <nav className="flex h-[26px] shrink-0 items-center gap-2.5 pl-1">
                <span className="-mr-1.5 flex">
                    <Grip />
                </span>
                {menus.map((menu) => (
                    <button key={menu} type="button">
                        {menu}
                    </button>
                ))}
            </nav>
            <MainToolbar />
            <Tabs />
            <main className="flex min-h-0 flex-1 gap-[5px]">
                <Panel />
                <Panel remote />
            </main>
            <Queue />
            <StatusBar />
        </div>
    );
};

export default App;
